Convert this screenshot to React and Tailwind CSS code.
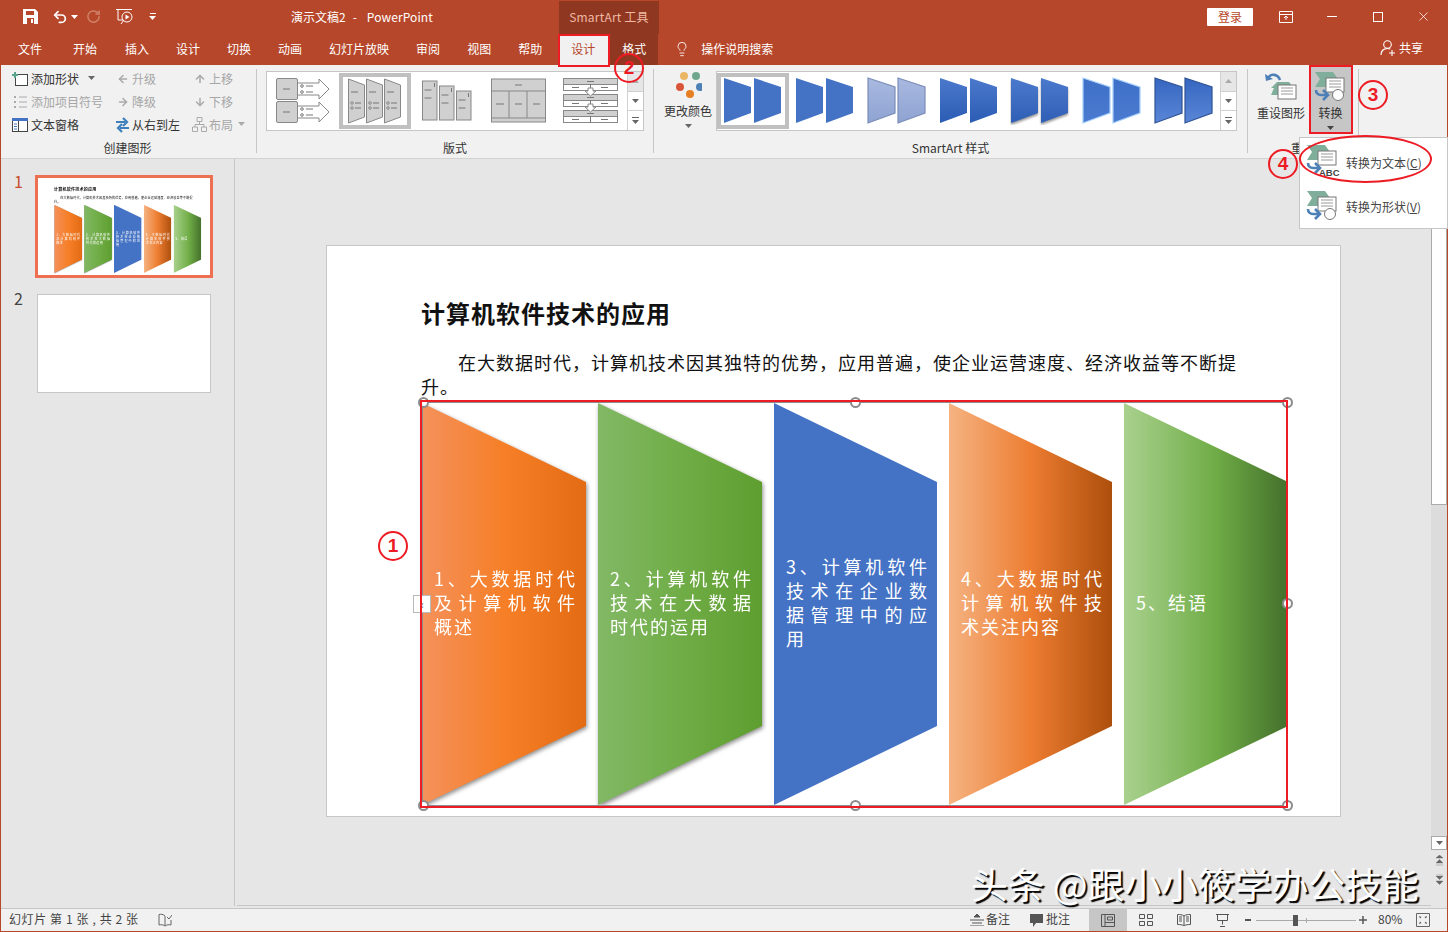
import React from "react";
import { ArrowDown, ArrowLeft, ArrowRight, ArrowUp, Lightbulb, RotateCcw, Undo2, X } from "lucide-react";

const Caret = ({ color = "#666" }) => (
  <svg width="7" height="4" viewBox="0 0 7 4">
    <path d="M0 0h7L3.5 4z" fill={color} />
  </svg>
);

const Chevron = ({ x = 1, y = 1, k = 1 }) => (
  <path
    d={`M${x} ${y}h${18 * k}l${5 * k} ${7 * k}-${5 * k} ${8 * k}h-${18 * k}l${5 * k}-${8 * k}z`}
    fill="#7fae9b"
  />
);

const Doc = ({ x, y, w = 18, h = 14 }) => (
  <g>
    <rect x={x} y={y} width={w} height={h} fill="#fff" stroke="#777" />
    <path
      d={`M${x + 3} ${y + 3}h${w - 6}M${x + 3} ${y + 6}h${w - 6}M${x + 3} ${y + 9}h${w - 6}`}
      stroke="#999"
      strokeWidth="1"
    />
  </g>
);

const BlueArrow = () => (
  <g fill="none" stroke="#4e80b8" strokeWidth="2.6">
    <path d="M2 19c0 3 2 5 5 5h6" />
    <path d="M9 19l5 5-5 5" />
  </g>
);

const ConvertIcon = ({ abc }) => (
  <svg width="34" height={abc ? 36 : 32} viewBox={abc ? "0 0 34 36" : "0 0 34 32"}>
    <Chevron />
    <Doc x={12} y={7} />
    <BlueArrow />
    {abc ? (
      <text x="13" y="32" fontSize="9.5" fontWeight="700" fill="#444" fontFamily="Liberation Sans">
        ABC
      </text>
    ) : (
      <circle cx="24" cy="24" r="5.5" fill="#fff" stroke="#777" />
    )}
  </svg>
);

const ResetIcon = () => (
  <svg width="32" height="30" viewBox="0 0 32 30">
    <path d="M6 17l6-6h12l5 6-5 7H6l3-7z" fill="#7fae9b" />
    <path d="M15 9C13 3 6 2 3 7" fill="none" stroke="#4e80b8" strokeWidth="2.6" />
    <path d="M0 3l1 7 7-2z" fill="#4e80b8" />
    <Doc x={13} y={14} w={18} h={14} />
  </svg>
);

// gallery thumbnails for the layout group
const dash = "#777";
const LayoutA = () => (
  <svg width="54" height="46" viewBox="0 0 54 46">
    {[0, 23].map((y) => (
      <g key={y}>
        <path d={`M21 ${y + 5}h22v-4l10 10-10 10v-4H21z`} fill="#fff" stroke="#888" />
        <rect x="0.5" y={y + 0.5} width="21" height="21" rx="1.5" fill="#d0d0d0" stroke="#888" />
        <path d={`M7 ${y + 11}h7M30 ${y + 8}h7M30 ${y + 14}h7`} stroke={dash} />
        <circle cx="26" cy={y + 8} r="1.3" fill="#fff" stroke={dash} />
        <circle cx="26" cy={y + 14} r="1.3" fill="#fff" stroke={dash} />
      </g>
    ))}
  </svg>
);
const LayoutB = () => (
  <svg width="54" height="46" viewBox="0 0 54 46">
    {[0, 18, 36].map((x) => (
      <g key={x}>
        <path d={`M${x + 0.5} 1l16 6v32l-16 6z`} fill="#d0d0d0" stroke="#888" />
        <path d={`M${x + 3} 14h7M${x + 7} 25h6M${x + 7} 30h6`} stroke={dash} />
        <circle cx={x + 4} cy="25" r="1.2" fill="#fff" stroke={dash} />
        <circle cx={x + 4} cy="30" r="1.2" fill="#fff" stroke={dash} />
      </g>
    ))}
  </svg>
);
const LayoutC = () => (
  <svg width="50" height="42" viewBox="0 0 50 42">
    {[
      [0.5, 1],
      [17.5, 6],
      [34.5, 11],
    ].map(([x, y]) => (
      <g key={x}>
        <rect x={x} y={y} width="14.5" height={41 - y - 1} fill="#d0d0d0" stroke="#888" />
        <path d={`M${x + 2} ${y + 9}h7M${x + 2} ${y + 17}h7M${x + 12} ${y + 2}v4`} stroke={dash} />
      </g>
    ))}
  </svg>
);
const LayoutD = () => (
  <svg width="56" height="46" viewBox="0 0 56 46">
    <rect x="0.5" y="1" width="54" height="43" fill="#d0d0d0" stroke="#888" />
    <path d="M0 13h55M0 40h55M18 13v27M36 13v27" stroke="#888" />
    <path d="M24 7h7M5 26h8M24 26h7M42 26h7" stroke={dash} />
  </svg>
);
const LayoutE = () => (
  <svg width="56" height="46" viewBox="0 0 56 46">
    {[0, 16, 32].map((y) => (
      <g key={y}>
        <rect x="0.5" y={y + 0.5} width="54" height="6" fill="#d0d0d0" stroke="#888" />
        <rect x="0.5" y={y + 6.5} width="54" height="6" fill="#fff" stroke="#888" />
        <path d={`M24 ${y + 3.5}h7M9 ${y + 9.5}h7M38 ${y + 9.5}h7M27.5 ${y + 6}v7`} stroke={dash} />
      </g>
    ))}
    {[10, 26].map((y) => (
      <path key={y} d={`M25 ${y}h5v3h3l-5.5 5-5.5-5h3z`} fill="#fff" stroke="#888" />
    ))}
  </svg>
);

const StyleThumb = ({ v }) => {
  const id = `st${v}`;
  const fills = [
    ["#4472c4", "#4472c4"],
    ["#4472c4", "#4472c4"],
    ["#a9b9e0", "#8ea3d2"],
    ["#4b79cc", "#2b5cb4"],
    ["#4b79cc", "#2f5fb6"],
    ["#3f70c8", "#4a7bd0"],
    ["#3566c0", "#5a86d6"],
  ][v];
  const stroke = [null, null, "#7b8db8", null, null, "#a7d0fa", "#2f5396"][v];
  return (
    <svg width="60" height="48" viewBox="0 0 60 48">
      <defs>
        <linearGradient id={id} x1="0" y1="0" x2="0" y2="1">
          <stop offset="0" stopColor={fills[0]} />
          <stop offset="1" stopColor={fills[1]} />
        </linearGradient>
      </defs>
      {[1, 31].map((x) => (
        <path
          key={x}
          d={`M${x} 1l27 9v26l-27 10z`}
          fill={`url(#${id})`}
          stroke={stroke || "none"}
          strokeWidth={stroke ? 1.2 : 0}
          className={v === 4 ? "[filter:drop-shadow(0_2px_1px_rgba(0,0,0,0.4))]" : ""}
        />
      ))}
    </svg>
  );
};

const GalleryScroll = () => (
  <div className="w-[16px] flex flex-col border-l border-[#d0d0d0] bg-white">
    <div className="flex-1 flex items-center justify-center bg-[#e6e6e6] border-b border-[#d0d0d0]">
      <svg width="7" height="4" viewBox="0 0 7 4">
        <path d="M0 4h7L3.5 0z" fill="#aaa" />
      </svg>
    </div>
    <div className="flex-1 flex items-center justify-center border-b border-[#d0d0d0]">
      <Caret />
    </div>
    <div className="flex-1 flex flex-col items-center justify-center gap-[2px]">
      <div className="w-[7px] h-px bg-[#666]" />
      <Caret />
    </div>
  </div>
);

const Gallery = ({ items, width, selected }) => (
  <div className={`flex h-[60px] bg-white border border-[#c6c6c6] ${width}`}>
    <div className="flex flex-1">
      {items.map((item, i) => (
        <div key={i} className="flex-1 py-px">
          <div className={`h-full flex items-center justify-center ${i === selected ? "border-4 border-[#c0c0c0]" : ""}`}>
            {item}
          </div>
        </div>
      ))}
    </div>
    <GalleryScroll />
  </div>
);

const Row = ({ icon, label, off, caret, narrow }) => (
  <div className={`flex items-center h-[23px] text-[12px] ${off ? "text-[#a6a6a6]" : "text-[#333]"}`}>
    <span className={`flex justify-center shrink-0 ${narrow ? "w-[17px]" : "w-[20px]"}`}>{icon}</span>
    <span className="ml-px whitespace-nowrap">{label}</span>
    {caret && (
      <span className={`mb-px ${off ? "ml-[5px]" : "ml-[9px]"}`}>
        <Caret color={off ? "#aaa" : "#666"} />
      </span>
    )}
  </div>
);

const Sep = () => <div className="w-px h-[84px] mt-[4px] bg-[#c6c6c6] shrink-0" />;

const GroupLabel = ({ children }) => (
  <div className="mt-auto h-[21px] text-center text-[12px] leading-[22px] text-[#333] whitespace-nowrap">{children}</div>
);

const Ribbon = () => {
  const grey = "#a9a9a9";
  return (
    <div className="flex h-[94px] bg-[#f1f1f1] border-b border-[#d2d2d2] shrink-0">
      {/* create graphic */}
      <div className="w-[255px] flex flex-col shrink-0 pt-[2px]">
        <div className="flex pl-[9px]">
          <div className="w-[104px]">
            <Row
              caret
              label="添加形状"
              icon={
                <svg width="16" height="14" viewBox="0 0 16 14">
                  <rect x="3.5" y="2.5" width="12" height="11" fill="#fff" stroke="#444" />
                  <path d="M3 0v6M0 3h6" stroke="#5aa58a" strokeWidth="2" />
                </svg>
              }
            />
            <Row
              off
              label="添加项目符号"
              icon={
                <svg width="14" height="14" viewBox="0 0 14 14">
                  <path d="M1 1h2v2H1zM1 6h2v2H1zM1 11h2v2H1z" fill="#aaa" />
                  <path d="M6 2h8M6 7h8M6 12h8" stroke="#aaa" />
                </svg>
              }
            />
            <Row
              label="文本窗格"
              icon={
                <svg width="16" height="14" viewBox="0 0 16 14">
                  <rect x="0.5" y="0.5" width="15" height="13" fill="#fff" stroke="#444" />
                  <rect x="0" y="0" width="16" height="3" fill="#4472c4" />
                  <path d="M6.5 3v10" stroke="#444" />
                  <path d="M2 6h3M2 8.5h3M2 11h3" stroke="#4472c4" />
                </svg>
              }
            />
          </div>
          <div className="w-[77px]">
            <Row narrow off label="升级" icon={<ArrowLeft size={12} strokeWidth={3} color={grey} />} />
            <Row narrow off label="降级" icon={<ArrowRight size={12} strokeWidth={3} color={grey} />} />
            <Row
              narrow
              label="从右到左"
              icon={
                <svg width="15" height="16" viewBox="0 0 15 16">
                  <path d="M1 5h9M8 1l4 4-4 4" fill="none" stroke="#3e7fbd" strokeWidth="2.2" />
                  <path d="M14 11H5M7 7l-4 4 4 4" fill="none" stroke="#3e7fbd" strokeWidth="2.2" />
                </svg>
              }
            />
          </div>
          <div>
            <Row narrow off label="上移" icon={<ArrowUp size={12} strokeWidth={3} color={grey} />} />
            <Row narrow off label="下移" icon={<ArrowDown size={12} strokeWidth={3} color={grey} />} />
            <Row
              narrow
              off
              caret
              label="布局"
              icon={
                <svg width="15" height="15" viewBox="0 0 15 15">
                  <path
                    d="M5 .5h5v4H5zM.5 10h5v4.500h-5zM9.500 10h5v4.500h-5zM7.500 4.500V7.500M3 10V7.500h9V10"
                    fill="none"
                    stroke="#aaa"
                  />
                </svg>
              }
            />
          </div>
        </div>
        <GroupLabel>
          <span className="pr-[2px]">创建图形</span>
        </GroupLabel>
      </div>
      <Sep />

      {/* layouts */}
      <div className="w-[396px] flex flex-col shrink-0 pt-[6px] pl-[9px]">
        <Gallery
          width="w-[378px]"
          selected={1}
          items={[<LayoutA />, <LayoutB />, <LayoutC />, <LayoutD />, <LayoutE />]}
        />
        <GroupLabel>
          <span className="pr-[9px]">版式</span>
        </GroupLabel>
      </div>
      <Sep />

      {/* smartart styles */}
      <div className="w-[593px] flex flex-col shrink-0 pt-[6px]">
        <div className="flex">
          <div className="w-[62px] pl-[6px] flex flex-col items-center">
            <svg width="28" height="30" viewBox="0 0 28 30">
              <circle cx="10" cy="5" r="4" fill="#eab765" />
              <circle cx="22" cy="5" r="4" fill="#6fa78c" />
              <circle cx="6" cy="16" r="4" fill="#d9553a" />
              <circle cx="26" cy="16" r="4" fill="#4e80b8" />
              <circle cx="16" cy="23" r="4" fill="#e67e22" />
            </svg>
            <span className="text-[12px] leading-[18px] text-[#333] mt-[1px] whitespace-nowrap">更改颜色</span>
            <span className="mt-[4px]">
              <Caret />
            </span>
          </div>
          <Gallery
            width="w-[521px]"
            selected={0}
            items={[0, 1, 2, 3, 4, 5, 6].map((v) => <StyleThumb key={v} v={v} />)}
          />
        </div>
        <GroupLabel>SmartArt 样式</GroupLabel>
      </div>
      <Sep />

      {/* reset */}
      <div className="w-[110px] flex flex-col shrink-0">
        <div className="flex pl-[5px] h-[69px]">
          <div className="w-[56px] flex flex-col items-center pt-[6px]">
            <ResetIcon />
            <span className="text-[12px] leading-[18px] text-[#333] whitespace-nowrap mt-[3px]">重设图形</span>
          </div>
          <div className="w-[43px] bg-[#c6c6c6] flex flex-col items-center pt-[6px]">
            <ConvertIcon />
            <span className="text-[12px] leading-[18px] text-[#333] mt-[1px]">转换</span>
            <span className="mt-[4px]">
              <Caret color="#444" />
            </span>
          </div>
        </div>
        <GroupLabel>重置</GroupLabel>
      </div>
      <Sep />
    </div>
  );
};

const Shape = ({ bg, shadow, lines, width }) => (
  <div className={`h-full ${width} ${shadow ? "[filter:drop-shadow(1px_2px_2px_rgba(0,0,0,0.45))]" : ""}`}>
    <div
      className={`h-full flex flex-col justify-center pl-[12px] pb-[5px] text-white text-[18px] leading-[24px] [clip-path:polygon(0_0,100%_79px,100%_323px,0_100%)] ${bg}`}
    >
      {lines.map((line, i) => (
        <div
          key={i}
          className={`w-[141px] whitespace-nowrap ${
            i < lines.length - 1 ? "[text-align:justify] [text-align-last:justify]" : "tracking-[2px]"
          }`}
        >
          {line}
        </div>
      ))}
    </div>
  </div>
);

const SlideContent = () => (
  <div className="w-[1012px] h-[569px] pl-[94px] pt-[51px] bg-white">
    <div className="text-[24px] leading-[32px] font-bold tracking-[1px] text-[#111]">计算机软件技术的应用</div>
    <p className="mt-[21px] w-[830px] text-[18px] leading-[24px] tracking-[1px] indent-[37px] text-[#111]">
      在大数据时代，计算机技术因其独特的优势，应用普遍，使企业运营速度、经济收益等不断提升。
    </p>
    <div className="mt-[5px] ml-px h-[402px] flex gap-[12px]">
      <Shape
        shadow
        width="w-[164px]"
        bg="bg-[linear-gradient(90deg,#f4915c,#f67f27_50%,#e36b14)]"
        lines={["1、大数据时代", "及计算机软件", "概述"]}
      />
      <Shape
        shadow
        width="w-[164px]"
        bg="bg-[linear-gradient(90deg,#82b865,#70ad47_50%,#5e9e2f)]"
        lines={["2、计算机软件", "技术在大数据", "时代的运用"]}
      />
      <Shape width="w-[163px]" bg="bg-[#4472c4]" lines={["3、计算机软件", "技术在企业数", "据管理中的应", "用"]} />
      <Shape
        width="w-[163px]"
        bg="bg-[linear-gradient(90deg,#f5b382,#ed7d31_50%,#ad4f0c)]"
        lines={["4、大数据时代", "计算机软件技", "术关注内容"]}
      />
      <Shape width="w-[164px]" bg="bg-[linear-gradient(90deg,#a9d18e,#70ad47_55%,#44702c)]" lines={["5、结语"]} />
    </div>
  </div>
);

const ThumbPane = () => (
  <div className="w-[234px] shrink-0 border-r border-[#c6c6c6] pt-[16px] text-[16px]">
    <div className="flex">
      <span className="w-[34px] pl-[13px] text-[#c9492c] leading-[12px]">1</span>
      <div className="w-[178px] h-[103px] border-[3px] border-[#ee7052] bg-white overflow-hidden">
        <div className="w-[1012px] h-[569px] origin-top-left scale-[0.17]">
          <SlideContent />
        </div>
      </div>
    </div>
    <div className="flex mt-[16px]">
      <span className="w-[36px] pl-[13px] text-[#444] leading-[8px]">2</span>
      <div className="w-[174px] h-[99px] border border-[#c6c6c6] bg-white" />
    </div>
  </div>
);

const VScroll = () => (
  <div className="w-[16px] shrink-0 flex flex-col items-stretch">
    <div className="h-[347px] bg-[#dcdcdc] pt-[15px]">
      <div className="h-[331px] bg-white border border-[#ababab]" />
    </div>
    <div className="h-[330px] bg-[#dcdcdc]" />
    <div className="h-[14px] bg-white border border-[#ababab] flex items-center justify-center">
      <Caret />
    </div>
    {["M0 3h7L3.500 0zM0 8h7L3.500 4.500zM0 10h7", "M0 0h7M0 2h7L3.500 5.500zM0 7h7L3.500 10.500z"].map((d) => (
      <div key={d} className="h-[18px] flex items-center justify-center mt-px">
        <svg width="9" height="11" viewBox="0 0 7 11">
          <path d={d} fill="#666" stroke="#666" strokeWidth="0.4" />
        </svg>
      </div>
    ))}
  </div>
);

const ViewBtn = ({ active, children }) => (
  <div className={`w-[38px] h-full flex items-center justify-center ${active ? "bg-[#c6c6c6]" : ""}`}>{children}</div>
);

const StatusBar = () => (
  <div className="h-[23px] shrink-0 flex items-center bg-[#f1f1f1] border-t border-[#c6c6c6] text-[12px] text-[#444]">
    <span className="ml-[8px] mb-[2px] tracking-[0.6px] whitespace-pre">幻灯片 第 1 张 , 共 2 张</span>
    <svg className="ml-[19px]" width="14" height="14" viewBox="0 0 14 14">
      <path d="M7 3C5 1 3 1 1 1.500V12c2-.5 4-.5 6 1 2-1.500 4-1.500 6-1V7M7 3v10" fill="none" stroke="#666" />
      <path d="M9 4l2 2 3-4" fill="none" stroke="#666" />
    </svg>
    <div className="ml-auto flex items-center h-full pr-[17px]">
      <svg width="14" height="12" viewBox="0 0 14 12">
        <path d="M7 0L4 3h6zM0 6h14M2 9h10M0 12h14" fill="#555" stroke="#555" strokeWidth="1" />
      </svg>
      <span className="ml-[2px] mr-[19px] mb-[2px]">备注</span>
      <svg width="15" height="15" viewBox="0 0 15 15">
        <path d="M1 1h13v9H7l-3 4v-4H1z" fill="#555" />
      </svg>
      <span className="ml-[2px] mr-[19px] mb-[2px]">批注</span>
      <ViewBtn active>
        <svg width="14" height="13" viewBox="0 0 14 13">
          <path d="M.5.500h13v12H.5zM4 .500v12M4 8.500h9.500M6.500 3h5v3h-5z" fill="none" stroke="#555" />
        </svg>
      </ViewBtn>
      <ViewBtn>
        <svg width="14" height="12" viewBox="0 0 14 12">
          <path d="M.5.500h5v4h-5zM8.500.500h5v4h-5zM.5 7.500h5v4h-5zM8.500 7.500h5v4h-5z" fill="none" stroke="#555" />
        </svg>
      </ViewBtn>
      <ViewBtn>
        <svg width="14" height="12" viewBox="0 0 14 12">
          <path d="M7 2C5 .5 3 .5.500.500v10c2.500 0 4.500 0 6.500 1.500 2-1.500 4-1.500 6.500-1.500V.500C11 .5 9 .5 7 2zM7 2v10M2 3h3M2 5h3M2 7h3M9 3h3M9 5h3M9 7h3" fill="none" stroke="#555" />
        </svg>
      </ViewBtn>
      <ViewBtn>
        <svg width="13" height="13" viewBox="0 0 13 13">
          <path d="M0 .500h13M1.500.500v6h10v-6M6.500 6.500v4M4 12.500h5" fill="none" stroke="#555" />
        </svg>
      </ViewBtn>
      <div className="ml-[4px] w-[6px] h-[2px] bg-[#555]" />
      <div className="ml-[5px] w-[100px] h-[11px] flex items-center relative">
        <div className="w-full h-px bg-[#aaa]" />
        <div className="absolute left-[37px] top-0 w-[5px] h-[11px] bg-[#555]" />
        <div className="absolute left-[50px] top-[3px] w-px h-[5px] bg-[#aaa]" />
      </div>
      <svg className="ml-[3px]" width="8" height="8" viewBox="0 0 8 8">
        <path d="M0 4h8M4 0v8" stroke="#555" strokeWidth="1.500" />
      </svg>
      <span className="ml-[11px] w-[38px] mb-[2px]">80%</span>
      <svg width="14" height="14" viewBox="0 0 14 14">
        <path d="M.5.500h13v13H.5z" fill="none" stroke="#666" />
        <path d="M3 3l2.500 1L4 5.500zM11 3l-1 2.500L8.500 4zM3 11l1-2.500L5.500 10zM11 11l-2.500-1L10 8.500z" fill="#555" />
      </svg>
    </div>
  </div>
);

const TitleBar = () => (
  <div className="h-[64px] shrink-0 bg-[#b7472a] text-white text-[12px] flex flex-col">
    <div className="h-[33px] flex">
      <div className="w-[558px] flex items-center shrink-0 pb-[2px]">
        <svg className="ml-[22px]" width="15" height="15" viewBox="0 0 15 15">
          <path d="M0 0h12l3 3v12H0z" fill="#fff" />
          <path d="M3 2h8v4H3zM4 9h7v6H4z" fill="#b7472a" />
          <path d="M8 10h2v4H8z" fill="#fff" />
        </svg>
        <span className="ml-[14px]">
          <Undo2 size={16} strokeWidth={2.6} color="#fff" />
        </span>
        <span className="ml-[3px]">
          <Caret color="#fff" />
        </span>
        <span className="ml-[8px]">
          <RotateCcw size={15} strokeWidth={2.4} color="#cf8066" className="-scale-x-100" />
        </span>
        <svg className="ml-[15px]" width="18" height="16" viewBox="0 0 18 16">
          <path d="M0 .500h16M2 .500V11h5M5 15l3-4" fill="none" stroke="#fff" />
          <circle cx="11" cy="8" r="5" fill="none" stroke="#fff" />
          <path d="M9.500 5.500l4 2.500-4 2.500z" fill="#fff" />
        </svg>
        <span className="ml-[15px] flex flex-col items-center gap-[2px]">
          <span className="w-[6px] h-px bg-white" />
          <Caret color="#fff" />
        </span>
        <span className="ml-[135px] whitespace-nowrap">演示文稿2</span>
        <span className="ml-[7px]">-</span>
        <span className="ml-[10px] tracking-[0.1px]">PowerPoint</span>
      </div>
      <div className="w-[100px] shrink-0 bg-[#8f3720] text-[#f0b9a6] tracking-[0.2px] pb-[2px] flex items-center justify-center whitespace-nowrap">
        SmartArt 工具
      </div>
      <div className="flex-1 flex items-center pb-[2px]">
        <span className="ml-[548px] w-[46px] h-[18px] leading-[18px] bg-white text-[#b7472a] rounded-[1px] text-center">登录</span>
        <svg className="ml-[26px]" width="14" height="12" viewBox="0 0 14 12">
          <path d="M.5.500h13v11H.5zM0 3.500h14M7 9V5M5 7l2-2 2 2" fill="none" stroke="#fff" />
        </svg>
        <span className="ml-[34px] w-[10px] h-px bg-white" />
        <span className="ml-[36px] w-[10px] h-[10px] border border-white" />
        <span className="ml-[33px]">
          <X size={15} strokeWidth={1.2} color="#fff" />
        </span>
      </div>
    </div>
    <div className="flex-1 flex">
      <div className="flex items-center gap-[27px] pl-[17px] pb-[2px]">
        <span className="mr-[4px]">文件</span>
        <span className="mr-px">开始</span>
        {["插入", "设计", "切换", "动画", "幻灯片放映", "审阅", "视图", "帮助"].map((t) => (
          <span key={t} className="whitespace-nowrap">
            {t}
          </span>
        ))}
      </div>
      <div className="ml-[16px] w-[100px] flex bg-[#8f3720]">
        <div className="w-[50px] bg-[#f1f1f1] text-[#b7472a] pb-[2px] flex items-center justify-center">设计</div>
        <div className="ml-[14px] pb-[2px] flex items-center">格式</div>
      </div>
      <div className="ml-[16px] flex items-center pb-[2px]">
        <Lightbulb size={16} strokeWidth={1.3} color="#fff" />
        <span className="ml-[11px]">操作说明搜索</span>
      </div>
      <div className="ml-auto flex items-center pr-[24px] pb-[4px]">
        <svg width="16" height="16" viewBox="0 0 16 16" fill="none" stroke="#fff" strokeWidth="1.1">
          <circle cx="7.500" cy="4.500" r="3.800" />
          <path d="M1 15c0-4 2.500-6.500 6.500-6.500 1 0 2 .2 2.800.6" />
          <path d="M12 10v6M9 13h6" />
        </svg>
        <span className="ml-[3px]">共享</span>
      </div>
    </div>
  </div>
);

const Circled = ({ n, pos }) => (
  <div
    className={`absolute w-[30px] h-[30px] rounded-full border-2 border-[#ed1c24] flex items-center justify-center text-[#ed1c24] text-[19px] font-bold font-['Liberation_Sans',sans-serif] ${pos}`}
  >
    {n}
  </div>
);

const Handle = ({ pos }) => (
  <div className={`absolute w-[11px] h-[11px] rounded-full bg-white border-2 border-[#8c8c8c] ${pos}`} />
);

const MenuItem = ({ abc, label, hot }) => (
  <div className="h-[44px] flex items-center pl-[6px] text-[12px] text-[#444]">
    <ConvertIcon abc={abc} />
    <span className="ml-[6px] mt-[2px] whitespace-nowrap">
      {label}(<span className="underline">{hot}</span>)
    </span>
  </div>
);

const App = () => {
  return (
    <div className="relative w-[1448px] h-[932px] overflow-hidden font-['Noto_Sans_CJK_SC','Liberation_Sans',sans-serif]">
      <div className="h-full flex flex-col border border-[#b7472a] bg-[#e6e6e6]">
        <TitleBar />
        <Ribbon />
        <div className="flex-1 flex min-h-0 pb-[2px]">
          <ThumbPane />
          <div className="flex-1 ml-[2px] border-b border-[#c6c6c6] pl-[89px] pt-[86px] min-w-0">
            <div className="w-[1015px] h-[572px] border border-[#c6c6c6] bg-white">
              <SlideContent />
            </div>
          </div>
          <VScroll />
        </div>
        <StatusBar />
      </div>

      {/* selection frame and tutorial marks */}
      <div className="absolute left-[422px] top-[402px] w-[866px] h-[404px] border border-[#8c8c8c]" />
      <Handle pos="left-[418px] top-[397px]" />
      <Handle pos="left-[850px] top-[397px]" />
      <Handle pos="left-[1282px] top-[397px]" />
      <Handle pos="left-[1282px] top-[598px]" />
      <Handle pos="left-[418px] top-[800px]" />
      <Handle pos="left-[850px] top-[800px]" />
      <Handle pos="left-[1282px] top-[800px]" />
      <div className="absolute left-[413px] top-[595px] w-[18px] h-[18px] bg-white border border-[#bbb] flex items-center justify-center text-[12px] leading-none text-[#444]">
        ‹
      </div>
      <div className="absolute left-[420px] top-[400px] w-[868px] h-[408px] border-2 border-[#ed1c24]" />

      <div className="absolute left-[1299px] top-[137px] w-[149px] h-[92px] bg-white border border-[#c6c6c6] pt-[2px]">
        <MenuItem abc label="转换为文本" hot="C" />
        <MenuItem label="转换为形状" hot="V" />
      </div>

      <div className="absolute left-[558px] top-[34px] w-[52px] h-[33px] border-2 border-[#ed1c24]" />
      <div className="absolute left-[1309px] top-[65px] w-[44px] h-[69px] border-2 border-[#ed1c24]" />
      <div className="absolute left-[1299px] top-[135px] w-[133px] h-[48px] rounded-[50%] border-2 border-[#ed1c24]" />
      <Circled n="1" pos="left-[378px] top-[531px]" />
      <Circled n="2" pos="left-[614px] top-[53px]" />
      <Circled n="3" pos="left-[1358px] top-[80px]" />
      <Circled n="4" pos="left-[1268px] top-[149px]" />

      <div className="absolute left-[971px] top-[858px] text-[36.8px] leading-[50px] text-white whitespace-nowrap [text-shadow:2px_2px_1px_#000]">
        头条 @跟小小筱学办公技能
      </div>
    </div>
  );
};

export default App;
